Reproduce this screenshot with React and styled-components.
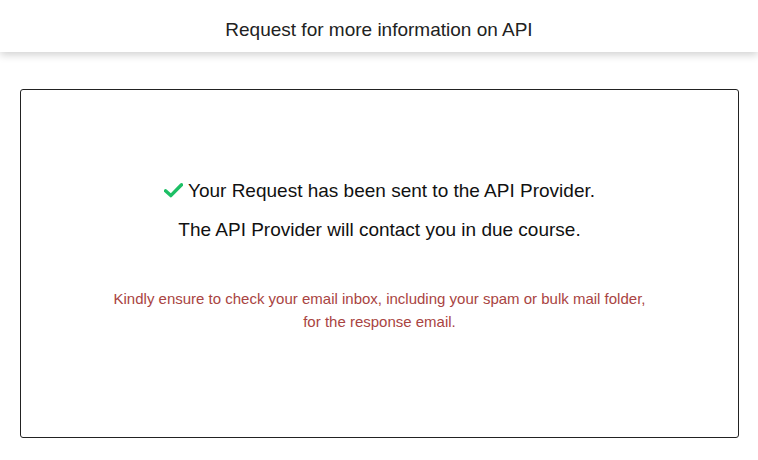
import styled, { createGlobalStyle } from 'styled-components'

const GlobalStyle = createGlobalStyle`
  html, body {
    margin: 0;
    padding: 0;
    background: #fff;
    font-family: Arial, 'Liberation Sans', sans-serif;
  }
`

function CheckIcon() {
  return (
    <svg width='19' height='15' viewBox='0 0 19 15' aria-hidden='true'>
      <path
        d='M1.5 7.8 L6.8 12.6 L17.5 1.8'
        fill='none'
        stroke='#1dbf65'
        strokeWidth='3.4'
        strokeLinecap='round'
        strokeLinejoin='round'
      />
    </svg>
  )
}

function App() {
  return (
    <>
      <GlobalStyle />
      <Page>
        <Header>
          <h1>Request for more information on API</h1>
        </Header>

        <Main>
          <Card>
            <Message>
              <CheckIcon />
              Your Request has been sent to the API Provider.
            </Message>
            <Message>The API Provider will contact you in due course.</Message>

            <Note>
              Kindly ensure to check your email inbox, including your spam or
              bulk mail folder,
              <br />
              for the response email.
            </Note>
          </Card>
        </Main>
      </Page>
    </>
  )
}

export default App

const Page = styled.div`
  width: 100%;
  min-height: 460px;
  display: flex;
  flex-direction: column;
`

const Header = styled.header`
  height: 52px;
  display: flex;
  align-items: center;
  justify-content: center;
  background: #fff;
  box-shadow: 0 3px 8px rgba(0, 0, 0, 0.18);
  position: relative;
  z-index: 1;

  & h1 {
    margin: 0;
    font-size: 19px;
    font-weight: 400;
    color: #222;
    position: relative;
    top: 4px;
  }
`

const Main = styled.main`
  padding: 37px 19px 0 20px;
`

const Card = styled.section`
  height: 349px;
  box-sizing: border-box;
  border: 1px solid #222;
  border-radius: 3px;
  display: flex;
  flex-direction: column;
  align-items: center;
  padding-top: 90px;
`

const Message = styled.p`
  margin: 0 0 17px;
  font-size: 19px;
  line-height: 22px;
  color: #111;
  display: flex;
  align-items: center;
  gap: 5px;

  & svg {
    position: relative;
    top: -1px;
  }
`

const Note = styled.p`
  margin: 29px 0 0;
  font-size: 15px;
  line-height: 23px;
  color: #a94442;
  text-align: center;
`
